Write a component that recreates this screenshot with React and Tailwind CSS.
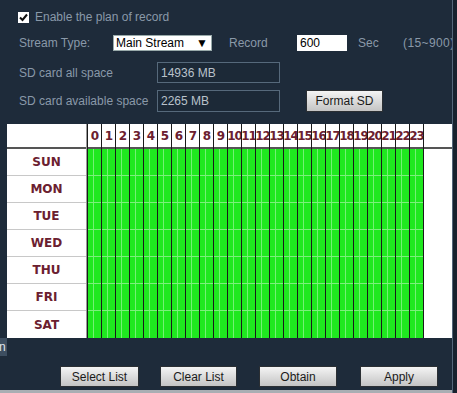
import React from "react";

const days = ["SUN", "MON", "TUE", "WED", "THU", "FRI", "SAT"];
const hours = Array.from({ length: 24 }, (_, i) => i);

function GrayButton({ children, className = "" }) {
  return (
    <button
      className={`shrink-0 h-[21px] border border-[#2b2f33] bg-[linear-gradient(#f4f4f4,#c4c4c4)] text-[12px] text-[#1a1a1a] leading-none ${className}`}
    >
      {children}
    </button>
  );
}

export default function App() {
  return (
    <div
      className="flex w-[457px] h-[393px] overflow-hidden bg-[#1e2b3a] relative"
      style={{ fontFamily: "Tahoma, 'Liberation Sans', Arial, sans-serif" }}
    >
      <div className="w-[452px] shrink-0 flex flex-col overflow-hidden">
        {/* Enable row */}
        <div className="flex items-center h-[14px] mt-[10px] pl-[18px]">
          <div className="w-[11px] h-[11px] bg-white flex items-center justify-center">
            <svg width="9" height="9" viewBox="0 0 9 9">
              <path d="M1 4.5 L3.5 7 L8 1.5" stroke="#111" strokeWidth="2" fill="none" />
            </svg>
          </div>
          <span className="ml-[6px] text-[12px] text-[#8a99a9]">Enable the plan of record</span>
        </div>

        {/* Stream type row */}
        <div className="flex items-center h-[16px] mt-[11px] pl-[19px] text-[12px] text-[#8a99a9] whitespace-nowrap">
          <span className="shrink-0 w-[94px]">Stream Type:</span>
          <div className="shrink-0 w-[99px] h-[16px] bg-white border border-[#9aa] flex items-center justify-between pl-[2px] pr-[3px] text-black">
            <span>Main Stream</span>
            <span className="text-[12px] leading-none">▼</span>
          </div>
          <span className="shrink-0 ml-[17px] w-[68px]">Record</span>
          <div className="shrink-0 w-[50px] h-[16px] bg-white pl-[3px] flex items-center text-black">600</div>
          <span className="shrink-0 ml-[11px] w-[45px]">Sec</span>
          <span className="shrink-0 tracking-[0.4px]">(15~900)</span>
        </div>

        {/* SD all space */}
        <div className="flex items-center h-[21px] mt-[11px] pl-[19px] text-[12px] text-[#8a99a9] whitespace-nowrap">
          <span className="shrink-0 w-[138px]">SD card all space</span>
          <div className="shrink-0 w-[123px] h-[21px] border border-[#56697b] bg-[#1c2937] flex items-center pl-[3px] text-[#b9c2cb]">
            14936 MB
          </div>
        </div>

        {/* SD available */}
        <div className="flex items-center h-[22px] mt-[7px] pl-[19px] text-[12px] text-[#8a99a9] whitespace-nowrap">
          <span className="shrink-0 w-[138px]">SD card available space</span>
          <div className="shrink-0 w-[123px] h-[22px] border border-[#56697b] bg-[#1c2937] flex items-center pl-[3px] text-[#b9c2cb]">
            2265 MB
          </div>
          <GrayButton className="ml-[26px] w-[77px] h-[22px]">Format SD</GrayButton>
        </div>

        {/* Schedule grid */}
        <div className="flex ml-[7px] mt-[12px] w-[445px] h-[214px] shrink-0">
          <div className="w-[80px] shrink-0 bg-white border-r border-[#9a9a9a] flex flex-col">
            <div className="h-[25px] border-b-2 border-[#555]" />
            {days.map((d) => (
              <div
                key={d}
                className="h-[27px] border-b border-[#c8c8c8] last:border-b-0 flex items-center justify-center text-[12px] font-bold text-[#6b2030]"
                style={{ fontFamily: "'DejaVu Sans', Verdana, sans-serif" }}
              >
                {d}
              </div>
            ))}
          </div>
          {hours.map((h) => (
            <div key={h} className="w-[14px] shrink-0 flex flex-col border-l border-[#1a1a1a]">
              <div
                className="h-[25px] bg-white border-b-2 border-[#555] flex items-center justify-center text-[12px] font-bold text-[#6b2030] whitespace-nowrap overflow-visible tracking-[-1px]"
                style={{ fontFamily: "'DejaVu Sans', Verdana, sans-serif" }}
              >
                {h}
              </div>
              {days.map((d) => (
                <div key={d} className="h-[27px] flex bg-[#1fe81f] border-b border-[#7cf07c] last:border-b-0">
                  <div className="w-[6px] border-r border-[#74f074]" />
                  <div className="flex-1" />
                </div>
              ))}
            </div>
          ))}
          <div className="flex-1 bg-white border-l border-[#1a1a1a] flex flex-col">
            <div className="h-[25px] border-b-2 border-[#555]" />
          </div>
        </div>

        {/* Buttons */}
        <div className="flex mt-[28px] ml-[60px]">
          <GrayButton className="w-[79px]">Select List</GrayButton>
          <GrayButton className="w-[77px] ml-[21px]">Clear List</GrayButton>
          <GrayButton className="w-[78px] ml-[22px]">Obtain</GrayButton>
          <GrayButton className="w-[78px] ml-[23px]">Apply</GrayButton>
        </div>
        <div className="mt-auto h-[3px] bg-[#a9aeb3]" />
      </div>
      <div className="w-[1px] bg-[#55677a]" />
      <div className="flex-1 bg-[#18222e]" />

      {/* peeking tab at left edge */}
      <div className="absolute left-0 top-[338px] w-[7px] h-[18px] bg-[#3d4e60] overflow-hidden flex items-center text-[12px] text-[#e0e6ec] leading-none">
        <span className="-ml-[1px]">n</span>
      </div>
    </div>
  );
}
